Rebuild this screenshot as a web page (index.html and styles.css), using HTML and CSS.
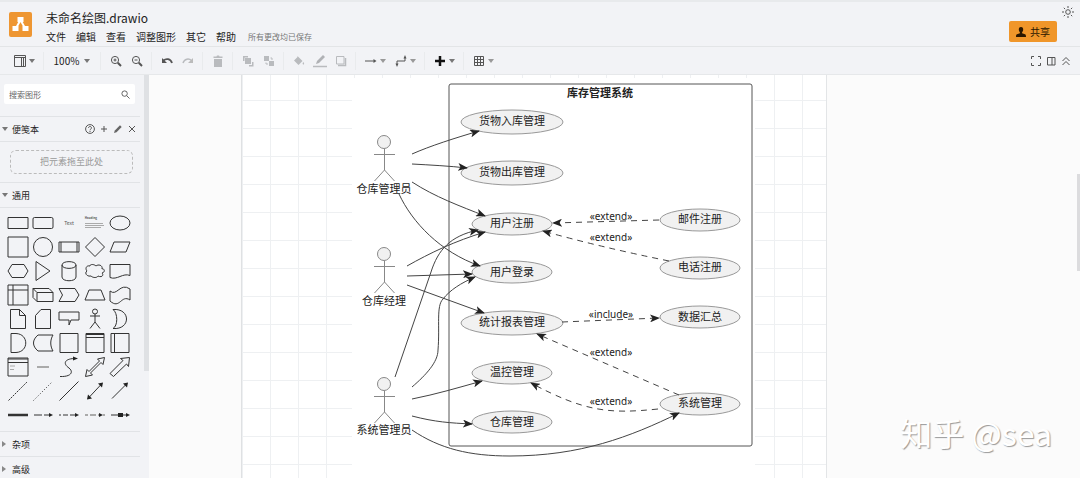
FILE: index.html
```html
<!DOCTYPE html>
<html lang="zh-CN">
<head>
    <meta charset="UTF-8">
    <meta name="viewport" content="width=device-width, initial-scale=1.0">
    <title>未命名绘图.drawio</title>
    <link rel="stylesheet" href="styles.css">
</head>
<body>
    <!-- 顶部：标题和菜单 -->
    <header class="header">
        <svg class="logo" viewBox="0 0 23 25">
            <rect width="23" height="25" rx="2" fill="#ee9632"/>
            <path d="M11.5 8L6.500 17M11.500 8L16.500 17" stroke="#fff" stroke-width="2"/>
            <path d="M8.500 5h6v5h-6zM3.500 14h6v5h-6zM13.500 14h6v5h-6z" fill="#fff"/>
        </svg>
        <div class="title-area">
            <a class="file-name" href="#">未命名绘图.drawio</a>
            <nav class="menu">
                <a href="#">文件</a>
                <a href="#">编辑</a>
                <a href="#">查看</a>
                <a href="#">调整图形</a>
                <a href="#">其它</a>
                <a href="#">帮助</a>
                <span class="status">所有更改均已保存</span>
            </nav>
        </div>
        <button class="share">
            <svg viewBox="0 0 10 10"><path d="M5 0C3.300 0 2.700 1.300 2.800 2.800 2.900 4 3.400 4.900 3.900 5.300V6.300L1 7.300C.3 7.600 0 8.200 0 10H10C10 8.200 9.700 7.600 9 7.300L6.100 6.300V5.300C6.600 4.900 7.100 4 7.200 2.800 7.300 1.300 6.700 0 5 0z" fill="#2b1700"/></svg>
            共享
        </button>
        <button class="theme" aria-label="外观">
            <svg viewBox="0 0 12 12"><circle cx="6" cy="6" r="2.300"/><path d="M6 0v2M6 10v2M0 6h2M10 6h2M1.800 1.800l1.300 1.300M8.900 8.900l1.300 1.300M1.800 10.200l1.300-1.300M8.900 3.100l1.300-1.300"/></svg>
        </button>
    </header>

    <!-- 工具栏 -->
    <div class="toolbar">
        <button class="tool wide" aria-label="视图">
            <svg viewBox="0 0 12 12"><path d="M.5 .5h11v11H.5zM.5 2.500h11M7.500 2.500v9M9.500 2.500v9"/></svg><i class="caret"></i>
        </button>
        <i class="sep"></i>
        <button class="tool zoom">100%<i class="caret"></i></button>
        <i class="sep"></i>
        <button class="tool" aria-label="放大"><svg viewBox="0 0 12 12"><circle cx="5" cy="5" r="3.600"/><path d="M3.500 5h3M5 3.500v3"/><path d="M7.800 7.800L11 11" stroke-width="2"/></svg></button>
        <button class="tool" aria-label="缩小"><svg viewBox="0 0 12 12"><circle cx="5" cy="5" r="3.600"/><path d="M3.500 5h3"/><path d="M7.800 7.800L11 11" stroke-width="2"/></svg></button>
        <i class="sep"></i>
        <button class="tool" aria-label="撤销"><svg viewBox="0 0 12 12"><path d="M2.500 5.500C5 3.300 9.500 3.500 11 8" stroke-width="1.800"/><path d="M1 3v5h5z" fill="#555" stroke="none"/></svg></button>
        <button class="tool off" aria-label="重做"><svg viewBox="0 0 12 12"><path d="M9.500 5.500C7 3.300 2.500 3.500 1 8" stroke-width="1.500"/><path d="M11 3v5H6z" fill="#bbb" stroke="none"/></svg></button>
        <i class="sep"></i>
        <button class="tool off" aria-label="删除"><svg viewBox="0 0 12 12"><path d="M2 4h8v8H2zM1.500 1.500h3l.5-1h2l.5 1h3v1.500h-9z" fill="#b9bbbe" stroke="none"/></svg></button>
        <i class="sep"></i>
        <button class="tool off" aria-label="移至最前"><svg viewBox="0 0 12 12"><path d="M1 1h5v1.500H2.500V6H1zM11.500 11.500H7V10h3V7h1.500zM3 3h6v6H3z" fill="#b9bbbe" stroke="none"/></svg></button>
        <button class="tool off" aria-label="移至最后"><svg viewBox="0 0 12 12"><path d="M1 1h5v5H1zM6 6h5v5H6z" fill="#b9bbbe" stroke="none"/><path d="M7.500 3h1.500v2M3 7.500v1.500h2"/></svg></button>
        <i class="sep"></i>
        <button class="tool off" aria-label="填充颜色"><svg viewBox="0 0 12 12"><path d="M4.500 1L9.500 6 5.500 10 1 5.500 4.500 2zM10.500 7c2 3-1.500 3.500-.8 1z" fill="#b9bbbe" stroke="none"/></svg></button>
        <button class="tool off pen" aria-label="线条颜色"><svg viewBox="0 0 14 14"><path d="M3 10l1-3 6-6 2 2-6 6z" fill="#b0b2b5" stroke="none"/><path d="M0 12.500h14" stroke-width="1.500"/></svg></button>
        <button class="tool off" aria-label="阴影"><svg viewBox="0 0 12 12"><path d="M1.500 1.500h7.500v7.500H1.500z"/><path d="M3 10.500h7.500V3" stroke-width="1.500"/></svg></button>
        <i class="sep"></i>
        <button class="tool wide" aria-label="连线"><svg viewBox="0 0 12 12"><path d="M0 6h10"/><path d="M8.500 4l3 2-3 2z" fill="#555" stroke="none"/></svg><i class="caret light"></i></button>
        <button class="tool wide" aria-label="航点"><svg viewBox="0 0 12 12"><path d="M2 10V6h8V2"/><path d="M.5 8.500h3L2 12zM8.500 3.500L10 0l1.500 3.500z" fill="#555" stroke="none"/></svg><i class="caret light"></i></button>
        <i class="sep"></i>
        <button class="tool wide" aria-label="插入"><svg viewBox="0 0 12 12"><path d="M6 1v10M1 6h10" stroke="#111" stroke-width="2.500"/></svg><i class="caret"></i></button>
        <i class="sep"></i>
        <button class="tool wide" aria-label="表格"><svg viewBox="0 0 12 12"><path d="M1.500 1.500h9v9h-9zM1.500 4.500h9M1.500 7.500h9M4.500 1.500v9M7.500 1.500v9"/></svg><i class="caret light"></i></button>
        <div class="view-tools">
            <button aria-label="全屏"><svg viewBox="0 0 10 10"><path d="M.5 3V.5H3M7 .5h2.500V3M9.500 7v2.500H7M3 9.500H.5V7"/></svg></button>
            <button aria-label="格式"><svg viewBox="0 0 10 10"><path d="M1.500 1.500h7.500v7.500H1.500zM6 1.500v7.500"/></svg></button>
            <button aria-label="折叠"><svg viewBox="0 0 10 10"><path d="M1.500 5L5 1.500 8.500 5M1.500 9L5 5.500 8.500 9"/></svg></button>
        </div>
    </div>

    <main class="main">
        <!-- 左侧图形库 -->
        <aside class="sidebar">
            <div class="library">
                <div class="search">
                    <input type="search" placeholder="搜索图形" aria-label="搜索图形">
                    <svg viewBox="0 0 10 10"><circle cx="4" cy="4" r="3"/><path d="M6.300 6.300L9.500 9.500"/></svg>
                </div>
                <div class="section">
                    <button class="section-name"><i class="caret"></i>便笺本</button>
                    <div class="section-tools">
                        <button aria-label="帮助"><svg viewBox="0 0 10 10"><circle cx="5" cy="5" r="4.400"/><path d="M3.500 4C3.500 2 6.500 2 6.500 4 6.500 5 5 5 5 6.300M5 7v1"/></svg></button>
                        <button aria-label="添加"><svg viewBox="0 0 10 10"><path d="M5 2v6M2 5h6"/></svg></button>
                        <button aria-label="编辑"><svg viewBox="0 0 10 10"><path d="M1 9l.8-2.500L7 1.300 8.700 3 3.500 8.200z" fill="#666" stroke="none"/></svg></button>
                        <button aria-label="关闭"><svg viewBox="0 0 10 10"><path d="M2 2l6 6M8 2L2 8"/></svg></button>
                    </div>
                </div>
                <div class="scratch"><div class="drop">把元素拖至此处</div></div>
                <div class="section"><button class="section-name"><i class="caret"></i>通用</button></div>
                <div class="shapes">
                    <svg viewBox="0 0 24 24"><path d="M2 6.500h20v11H2z"/></svg>
                    <svg viewBox="0 0 24 24"><rect x="2" y="6.500" width="20" height="11" rx="1.500"/></svg>
                    <svg viewBox="0 0 24 24"><text x="12" y="14" font-size="5">Text</text></svg>
                    <svg viewBox="0 0 24 24"><text class="bold" x="8" y="8" font-size="3">Heading</text><path class="thin" d="M2 12.500h18M2 14.500h19M2 16.500h16"/></svg>
                    <svg viewBox="0 0 24 24"><ellipse cx="12" cy="12" rx="10" ry="7"/></svg>

                    <svg viewBox="0 0 24 24"><path d="M2 2h20v20H2z"/></svg>
                    <svg viewBox="0 0 24 24"><circle cx="12" cy="12" r="9.500"/></svg>
                    <svg viewBox="0 0 24 24"><path d="M2 7h20v10H2zM4 7v10M20 7v10"/></svg>
                    <svg viewBox="0 0 24 24"><path d="M12 2.500l9.500 9.500-9.500 9.500L2.500 12z"/></svg>
                    <svg viewBox="0 0 24 24"><path d="M6 7h16l-4 10H2z"/></svg>

                    <svg viewBox="0 0 24 24"><path d="M6 5.500h12l4 6.500-4 6.500H6L2 12z"/></svg>
                    <svg viewBox="0 0 24 24"><path d="M5 2.500L19 12 5 21.500z"/></svg>
                    <svg viewBox="0 0 24 24"><path d="M5 6v12C5 23 19 23 19 18V6C19 1.500 5 1.500 5 6C5 10.500 19 10.500 19 6"/></svg>
                    <svg viewBox="0 0 24 24"><path d="M7 7C3 6 2 10 4 12 1 14 4 18 8 17 10 19 14 19 15 17 19 19 21 16 19 14 23 13 21 9 19 10 20 6 15 5 13 7 11 5 7 5 7 7z"/></svg>
                    <svg viewBox="0 0 24 24"><path d="M2 5.500h20v11c-7-3-13 5-20 2z"/></svg>

                    <svg viewBox="0 0 24 24"><path d="M2 2h20v20H2zM2 7h20M7 2v20"/></svg>
                    <svg viewBox="0 0 24 24"><path d="M2 5.500h16l4 4v9H6l-4-4zM2 5.500l4 4v9M6 9.500h16"/></svg>
                    <svg viewBox="0 0 24 24"><path d="M2 5.500h16l4 6.500-4 6.500H2L5.500 12z"/></svg>
                    <svg viewBox="0 0 24 24"><path d="M6 7h12l4 10H2z"/></svg>
                    <svg viewBox="0 0 24 24"><path d="M2 8C9 14 12-1 22 6v11C13 11 12 27 2 18z"/></svg>

                    <svg viewBox="0 0 24 24"><path d="M4.500 2.500h9l6 6v13h-15zM13.500 2.500v6h6"/></svg>
                    <svg viewBox="0 0 24 24"><path d="M10 2.500h9.500v19h-15V8.500z"/></svg>
                    <svg viewBox="0 0 24 24"><path d="M2 5h20v8h-8l-2 5v-5H2z"/></svg>
                    <svg viewBox="0 0 24 24"><circle cx="12" cy="4.500" r="2.500"/><path d="M12 7v8M7 9h10M12 15l-5 6.500M12 15l5 6.500"/></svg>
                    <svg viewBox="0 0 24 24"><path d="M5 2.500C23 1 23 23 5 21.500C10 19 10 6 5 2.500z"/></svg>

                    <svg viewBox="0 0 24 24"><path d="M5 2.500h5C23 3 23 21 10 21.500H5z"/></svg>
                    <svg viewBox="0 0 24 24"><path d="M7 4h15c-3 5-3 11 0 16H7C1 15 1 9 7 4z"/></svg>
                    <svg viewBox="0 0 24 24"><path d="M3 2.500h18v19H3z"/></svg>
                    <svg viewBox="0 0 24 24"><path d="M3 2.500h18v19H3zM3 6.500h18M3 3.500h18"/></svg>
                    <svg viewBox="0 0 24 24"><path d="M3 2.500h18v19H3zM6.500 2.500v19"/></svg>

                    <svg viewBox="0 0 24 24"><path d="M2 3h20v18H2zM2 7.500h20M2 4h20"/><path class="thin" d="M4 11h5M4 14.500h4"/></svg>
                    <svg viewBox="0 0 24 24"><path class="thin" d="M6 12h12" stroke-width="2"/></svg>
                    <svg viewBox="0 0 24 24"><path d="M3 21.500C14 22 17 17 12 13 6 9 7 4 17 3.500"/><path class="solid" d="M16 1.500l5 2-5 2z"/></svg>
                    <svg viewBox="0 0 24 24"><path d="M2.500 21.500L4 14.500l2 2L16.500 6l-2-2 7-1.500L20 9.500l-2-2L7.500 18l2 2z"/></svg>
                    <svg viewBox="0 0 24 24"><path d="M2 18.500L15 5.500 12.500 3.500 21.500 2.500 20.500 11.500 18.500 9 5.500 21.500z"/></svg>

                    <svg viewBox="0 0 24 24"><path stroke-dasharray="2 1" d="M2.500 21.500l19-19"/></svg>
                    <svg viewBox="0 0 24 24"><path stroke-dasharray="1 2" d="M2.500 21.500l19-19"/></svg>
                    <svg viewBox="0 0 24 24"><path d="M2.500 21.500l19-19"/></svg>
                    <svg viewBox="0 0 24 24"><path d="M5 19.500L19 4.500"/><path class="solid" d="M4 20.500l1-5 4 4zM20 3.500l-1 5-4-4z"/></svg>
                    <svg viewBox="0 0 24 24"><path d="M4 19.500L19 4.500"/><path class="solid" d="M20 3.500l-1 5-4-4z"/></svg>

                    <svg viewBox="0 0 24 24"><path d="M2 12h20" stroke-width="2.500"/></svg>
                    <svg viewBox="0 0 24 24"><path d="M3 12h8M13 12h7"/><path class="solid" d="M18 10l4 2-4 2z"/></svg>
                    <svg viewBox="0 0 24 24"><path d="M2 12h2M6 12h5M13 12h7"/><path class="solid" d="M18 10l4 2-4 2z"/></svg>
                    <svg viewBox="0 0 24 24"><path class="thin" d="M2 12h3M7 12h6M15 12h3M20 12h2" stroke-width="2"/><path class="solid" d="M16 10l4 2-4 2z"/></svg>
                    <svg viewBox="0 0 24 24"><path d="M3 12h17"/><path class="solid" d="M10 10h5v4h-5zM18 10l4 2-4 2z"/></svg>
                </div>
                <div class="section"><button class="section-name"><i class="caret right"></i>杂项</button></div>
                <div class="section"><button class="section-name"><i class="caret right"></i>高级</button></div>
            </div>
            <div class="split"></div>
        </aside>

        <!-- 画布 -->
        <section class="canvas">
            <div class="paper">
                <svg class="diagram" viewBox="352 78 403 400" width="403" height="400">
                    <defs>
                        <marker id="arrow" viewBox="0 0 10 8" refX="9" refY="4" markerWidth="10" markerHeight="8" orient="auto" markerUnits="userSpaceOnUse">
                            <path d="M0 0L10 4 0 8 2.500 4z" fill="#222" stroke="none"/>
                        </marker>
                    </defs>
                    <rect class="frame" x="449" y="84" width="303" height="362" rx="2"/>
                    <text class="bold" x="600" y="97">库存管理系统</text>

                    <!-- 用例 -->
                    <g class="case">
                        <ellipse cx="512" cy="122" rx="51" ry="12"/>
                        <ellipse cx="512" cy="173" rx="51" ry="12"/>
                        <ellipse cx="512" cy="224" rx="40" ry="11"/>
                        <ellipse cx="512" cy="272" rx="40" ry="11"/>
                        <ellipse cx="512" cy="323" rx="51" ry="12"/>
                        <ellipse cx="512" cy="373" rx="40" ry="11"/>
                        <ellipse cx="512" cy="422" rx="40" ry="11"/>
                        <ellipse cx="700" cy="220" rx="40" ry="11"/>
                        <ellipse cx="700" cy="268" rx="40" ry="11"/>
                        <ellipse cx="700" cy="317" rx="40" ry="11"/>
                        <ellipse cx="700" cy="404" rx="40" ry="11"/>
                    </g>
                    <text x="512" y="125">货物入库管理</text>
                    <text x="512" y="176">货物出库管理</text>
                    <text x="512" y="227">用户注册</text>
                    <text x="512" y="276">用户登录</text>
                    <text x="512" y="326">统计报表管理</text>
                    <text x="512" y="376">温控管理</text>
                    <text x="512" y="426">仓库管理</text>
                    <text x="700" y="223">邮件注册</text>
                    <text x="700" y="271">电话注册</text>
                    <text x="700" y="321">数据汇总</text>
                    <text x="700" y="407">系统管理</text>

                    <!-- 角色 -->
                    <g class="actor">
                        <circle cx="384" cy="142" r="6.500"/><path d="M384.500 149v21M374 154.500h21M384.500 170l-10 11M384.500 170l10 11"/>
                        <circle cx="384" cy="254" r="6.500"/><path d="M384.500 261v21M374 266.500h21M384.500 282l-10 11M384.500 282l10 11"/>
                        <circle cx="384" cy="384" r="6.500"/><path d="M384.500 391v21M374 396.500h21M384.500 412l-10 11M384.500 412l10 11"/>
                    </g>
                    <text x="384" y="193">仓库管理员</text>
                    <text x="384" y="305">仓库经理</text>
                    <text x="384" y="434">系统管理员</text>

                    <!-- 关联 -->
                    <g class="link">
                        <path d="M412 154C430 146 455 138 479 131"/>
                        <path d="M412 164C430 165 450 166 467 168"/>
                        <path d="M412 182C435 197 460 206 485 216"/>
                        <path d="M399 194C412 222 440 252 480 266"/>
                        <path d="M407 266C430 253 455 241 485 232"/>
                        <path d="M407 276L472 274"/>
                        <path d="M407 285L484 313"/>
                        <path d="M395 377L431 272C438 250 450 236 478 230"/>
                        <path d="M412 387C426 375 438 362 438 350C440 326 436 306 443 299C450 290 461 283 475 277"/>
                        <path d="M412 399C437 394 457 388 482 381"/>
                        <path d="M412 416C435 422 450 423 472 424"/>
                        <path d="M412 430C440 449 470 456 510 456C580 456 630 437 679 413"/>
                    </g>
                    <g class="link dashed">
                        <path d="M659 220L553 223"/>
                        <path d="M669 261Q600 247 543 231"/>
                        <path d="M562 322L659 318"/>
                        <path d="M679 395L537 334"/>
                        <path d="M658 409C610 414 585 412 531 383"/>
                    </g>
                    <g class="label">
                        <text x="611" y="220">«extend»</text>
                        <text x="611" y="241">«extend»</text>
                        <text x="611" y="318">«include»</text>
                        <text x="611" y="356">«extend»</text>
                        <text x="611" y="405">«extend»</text>
                    </g>
                </svg>
            </div>
            <div class="thumb"></div>
            <div class="watermark">知乎 @sea</div>
        </section>
    </main>
</body>
</html>
```
FILE: styles.css
```css
*{
    box-sizing: border-box;
}
body{
    margin: 0;
    height: 100vh;
    display: flex;
    flex-direction: column;
    overflow: hidden;
    background: #f2f3f6;
    color: #222;
    font-family: "Noto Sans CJK SC", sans-serif;
    font-size: 10px;
}
a{
    color: inherit;
    text-decoration: none;
}
button{
    padding: 0;
    border: 0;
    background: none;
    color: inherit;
    font: inherit;
    display: flex;
    align-items: center;
    cursor: pointer;
}
svg{
    fill: none;
    stroke: #555;
    flex: none;
}

/* 顶部 */
.header{
    display: flex;
    align-items: flex-start;
    height: 47px;
    padding: 8px 6px 0 9px;
    border-top: 2px solid #e8eaec;
    border-bottom: 1px solid #e3e5e7;
    flex: none;
}
.logo{
    width: 23px;
    height: 25px;
    margin-top: 2px;
    stroke: none;
}
.title-area{
    margin-left: 14px;
}
.file-name{
    display: block;
    font-size: 12px;
    line-height: 16px;
}
.menu{
    display: flex;
    gap: 10px;
    margin-top: 3px;
    line-height: 16px;
}
.status{
    margin-left: 2px;
    font-size: 8px;
    color: #777;
}
.share{
    width: 48px;
    height: 21px;
    margin: 11px 5px 0 auto;
    justify-content: center;
    gap: 4px;
    border-radius: 2px;
    background: #f0962a;
    color: #2b1700;
}
.share svg{
    width: 10px;
    height: 10px;
    stroke: none;
}
.theme svg{
    width: 12px;
    height: 12px;
    margin-top: -4px;
}

/* 工具栏 */
.toolbar{
    display: flex;
    align-items: center;
    height: 28px;
    padding: 0 9px;
    border-bottom: 1px solid #e6e8ea;
    flex: none;
}
.tool{
    width: 21px;
    height: 20px;
    justify-content: center;
}
.tool svg{
    width: 12px;
    height: 12px;
}
.pen svg{
    width: 14px;
    height: 14px;
}
.wide{
    width: 30px;
    gap: 3px;
}
.zoom{
    width: 48px;
    gap: 5px;
}
.off svg{
    stroke: #b9bbbe;
}
.sep{
    width: 1px;
    height: 18px;
    margin: 0 4px;
    background: #e9ebed;
}
.caret{
    border: 3px solid transparent;
    border-top: 4px solid #777;
    border-bottom: 0;
}
.light{
    border-top-color: #999;
}
.right{
    margin-right: 2px;
    border: 3px solid transparent;
    border-left: 4px solid #888;
    border-right: 0;
}
.view-tools{
    display: flex;
    gap: 5px;
    margin-left: auto;
}
.view-tools svg{
    width: 10px;
    height: 10px;
    display: block;
}

/* 左侧图形库 */
.main{
    display: flex;
    flex: 1;
    min-height: 0;
}
.sidebar{
    display: flex;
    width: 149px;
    flex: none;
}
.library{
    flex: 1;
    overflow: hidden;
}
.search{
    display: flex;
    align-items: center;
    height: 20px;
    margin: 9px 9px 12px 4px;
    padding: 0 5px;
    background: #fff;
    border-radius: 2px;
}
.search input{
    flex: 1;
    min-width: 0;
    padding: 0;
    border: 0;
    outline: none;
    background: none;
    font: inherit;
    font-size: 8px;
}
.search input::placeholder{
    color: #666;
}
.search svg{
    width: 9px;
    height: 9px;
}
.section{
    display: flex;
    justify-content: space-between;
    height: 25px;
    margin-right: 4px;
    padding: 0 3px 0 2px;
    border-top: 1px solid #e1e3e6;
}
.section-name{
    gap: 4px;
    font-size: 9px;
}
.section-tools{
    display: flex;
    gap: 4px;
}
.section-tools svg{
    width: 10px;
    height: 10px;
}
.scratch{
    margin-right: 4px;
    padding: 8px 7px 8px 10px;
    border-top: 1px solid #e1e3e6;
}
.drop{
    height: 24px;
    line-height: 22px;
    border: 1px dashed #bbb;
    border-radius: 6px;
    color: #999;
    font-size: 9px;
    text-align: center;
}
.shapes{
    display: grid;
    grid-template-columns: repeat(5, 1fr);
    grid-auto-rows: 24px;
    justify-items: center;
    margin-right: 4px;
    padding: 3px 7px 4px 5px;
    border-top: 1px solid #e1e3e6;
}
.shapes svg{
    width: 24px;
    height: 24px;
    stroke: #333;
}
.shapes .thin{
    stroke: #aaa;
}
.shapes .solid{
    fill: #222;
    stroke: none;
}
.shapes text{
    fill: #555;
    stroke: none;
    text-anchor: middle;
}
.split{
    width: 5px;
    height: 296px;
    background: #dfe1e4;
}

/* 画布 */
.canvas{
    position: relative;
    flex: 1;
    overflow: hidden;
    background: #fbfbfb;
}
.paper{
    width: 586px;
    margin-left: 92px;
    padding: 3px 0 0 110px;
    border-left: 1px solid #dfe1e3;
    border-right: 1px solid #e3e5e7;
    background-color: #fff;
    background-image:
        linear-gradient(#eef0f2 1px, transparent 1px),
        linear-gradient(90deg, #eef0f2 1px, transparent 1px);
    background-size: 28px 28px;
    background-position: 28px 25px;
}
.diagram{
    display: block;
    background: #fff;
}
.diagram text{
    fill: #222;
    stroke: none;
    font-size: 11px;
    text-anchor: middle;
}
.diagram .label text{
    font-family: "Noto Sans", sans-serif;
    font-size: 10px;
}
text.bold{
    font-weight: bold;
}
.frame{
    stroke: #555;
}
.case ellipse{
    fill: #f1f1f1;
    stroke: #999;
}
.actor{
    stroke: #888;
}
.actor circle{
    fill: #f1f1f1;
}
.link{
    stroke: #444;
}
.link path{
    marker-end: url(#arrow);
}
.dashed{
    stroke-dasharray: 6 5;
}
.thumb{
    position: absolute;
    top: 99px;
    right: 0;
    width: 3px;
    height: 97px;
    background: #dcdcde;
}
.watermark{
    position: absolute;
    right: 28px;
    bottom: 24px;
    color: #fff;
    font-size: 32px;
    line-height: 44px;
    text-shadow: 1px 1px 1px #999;
}
```
